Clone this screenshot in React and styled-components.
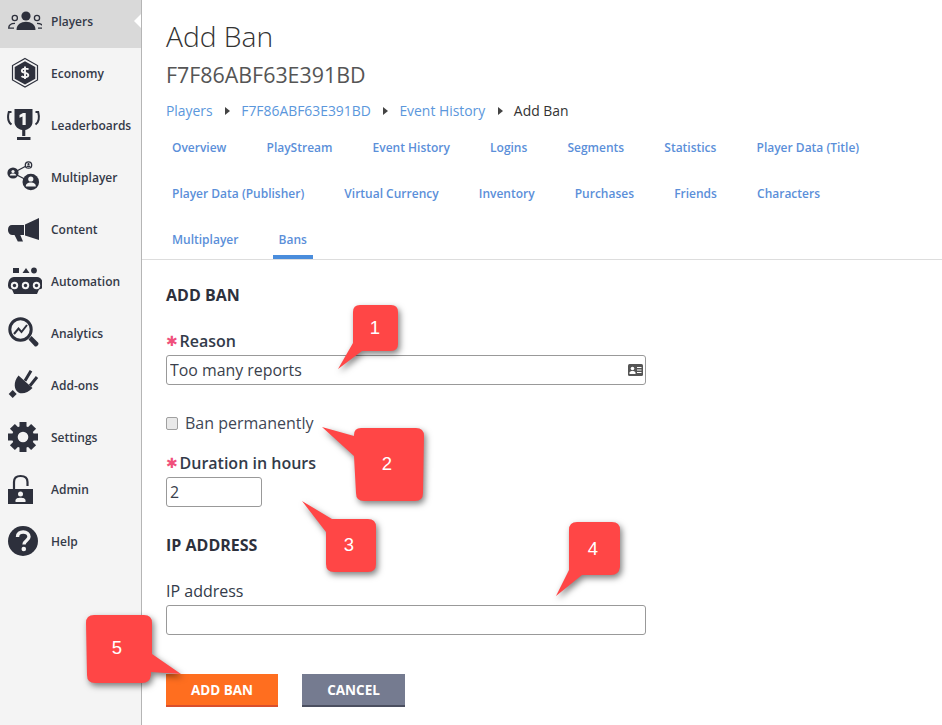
import React from "react";
import styled, { createGlobalStyle } from "styled-components";

const Global = createGlobalStyle`
  html, body { margin: 0; padding: 0; background: #fff; }
  body { font-family: "Open Sans", "Liberation Sans", sans-serif; color: #333; overflow: hidden; }
`;

const Page = styled.div`
  position: relative;
  display: flex;
  width: 942px;
  height: 725px;
  overflow: hidden;
`;

const Sidebar = styled.nav`
  flex: 0 0 141px;
  background: #f4f4f4;
  border-right: 1px solid #b5b5b5;
  display: flex;
  flex-direction: column;
  overflow: hidden;
`;

const NavList = styled.div`
  display: flex;
  flex-direction: column;
  margin-top: -5px;
`;

const NavRow = styled.div`
  position: relative;
  display: flex;
  align-items: center;
  height: 52px;
  flex: 0 0 52px;
  padding-left: 6px;
  gap: 9px;
  font-size: 12px;
  font-weight: 600;
  color: #343a48;
  background: ${(p) => (p.$active ? "#d9d9d9" : "transparent")};
  box-shadow: ${(p) => (p.$active ? "0 1px 0 #d9d9d9" : "none")};
  &::after {
    content: "";
    display: ${(p) => (p.$active ? "block" : "none")};
    position: absolute;
    right: 0;
    top: 19px;
    border-style: solid;
    border-width: 7px 7px 7px 0;
    border-color: transparent #fff transparent transparent;
  }
`;

const IconBox = styled.svg`
  width: 36px;
  height: 36px;
  flex: 0 0 36px;
  fill: #2d303c;
`;

const Main = styled.main`
  flex: 1;
  min-width: 0;
  display: flex;
  flex-direction: column;
`;

const Header = styled.header`
  padding: 16px 24px 0;
`;

const Title = styled.h1`
  margin: 0;
  font-size: 28.2px;
  font-weight: 300;
  line-height: 40px;
  color: #333;
`;

const SubTitle = styled.h2`
  margin: 5px 0 0;
  font-size: 21.4px;
  font-weight: 400;
  line-height: 28px;
  color: #555;
`;

const Breadcrumb = styled.div`
  display: flex;
  align-items: center;
  margin-top: 12px;
  font-size: 13.9px;
  line-height: 20px;
`;

const Crumb = styled.a`
  color: ${(p) => (p.$current ? "#333" : "#5b97dc")};
`;

const CrumbSep = styled.span`
  width: 0;
  height: 0;
  margin: 0 11.3px 0 12.3px;
  border-style: solid;
  border-width: 4px 0 4px 5px;
  border-color: transparent transparent transparent #444;
`;

const Tabs = styled.div`
  display: flex;
  flex-wrap: wrap;
  column-gap: 28.1px;
  row-gap: 3px;
  margin-top: 3px;
  padding: 0 24px;
  border-bottom: 1px solid #ddd;
`;

const Tab = styled.a`
  display: block;
  padding: 14px 6px 5px;
  font-size: 12px;
  font-weight: 600;
  line-height: 20px;
  color: #5b8fd9;
  border-bottom: 4px solid ${(p) => (p.$active ? "#4a8ddc" : "transparent")};
`;

const Form = styled.form`
  display: flex;
  flex-direction: column;
  align-items: flex-start;
  padding: 25px 24px 0;
`;

const SectionTitle = styled.h3`
  margin: ${(p) => p.$mt || 0}px 0 0;
  font-size: 16px;
  font-weight: 700;
  line-height: 20px;
  color: #2d303c;
  text-transform: uppercase;
`;

const Label = styled.label`
  display: flex;
  align-items: center;
  margin-top: ${(p) => p.$mt}px;
  font-size: 16px;
  font-weight: ${(p) => (p.$required ? 600 : 400)};
  line-height: 20px;
  color: #333b4a;
`;

const Asterisk = styled.span`
  display: inline-block;
  width: 13.5px;
  margin-left: 0;
  font-family: "DejaVu Sans", sans-serif;
  font-size: 14px;
  font-weight: 700;
  line-height: 20px;
  color: #f0507c;
`;

const InputWrap = styled.div`
  position: relative;
  margin-top: 4px;
  width: ${(p) => p.$w}px;
  height: 30px;
`;

const TextInput = styled.input`
  box-sizing: border-box;
  display: block;
  width: 100%;
  height: 100%;
  padding: 0 3px;
  border: 1px solid #999;
  border-radius: 3px;
  background: #fff;
  font-family: inherit;
  font-size: 15.9px;
  color: #3a3f4c;
  outline: none;
`;

const CardIcon = styled.svg`
  position: absolute;
  right: 3px;
  top: 9px;
  width: 15px;
  height: 12px;
`;

const CheckRow = styled.div`
  display: flex;
  align-items: center;
  gap: 7px;
  margin-top: 28px;
  height: 20px;
  font-size: 16px;
  line-height: 20px;
  color: #3f4756;
`;

const Check = styled.input`
  appearance: none;
  box-sizing: border-box;
  width: 12px;
  height: 13px;
  margin: 0;
  background: #e9e9e9;
  border: 1px solid #a0a0a0;
  border-radius: 2px;
`;

const Actions = styled.div`
  display: flex;
  gap: 24px;
  margin-top: 39px;
`;

const Button = styled.button`
  box-sizing: border-box;
  width: ${(p) => p.$w}px;
  height: 33px;
  padding: 0;
  border: 0;
  border-bottom: 2px solid ${(p) => (p.$primary ? "#d94f2c" : "#4b4f60")};
  background: ${(p) => (p.$primary ? "#ff6e1f" : "#757b90")};
  color: #fff;
  font-family: inherit;
  font-size: 13.5px;
  font-weight: 700;
`;

const CalloutLayer = styled.svg`
  position: absolute;
  inset: 0;
  width: 942px;
  height: 725px;
  pointer-events: none;
`;

const Bubble = styled.path`
  fill: #ff4646;
  filter: drop-shadow(2px 3px 3px rgba(0, 0, 0, 0.5));
`;

const BubbleNum = styled.text`
  fill: #fff;
  font-family: "Liberation Sans", Arial, sans-serif;
  font-size: 18.5px;
  text-anchor: middle;
`;

const BG = "#f4f4f4";
const icons = {
  players: (
    <>
      <circle cx="20" cy="13" r="4.6" />
      <path d="M10.500 27C10.500 21.500 15 18.800 20 18.800C25 18.800 29.500 21.500 29.500 27Z" />
      <g fill="none" stroke="#2d303c" strokeWidth="1.300">
        <circle cx="8.800" cy="15" r="2.600" />
        <circle cx="31" cy="15" r="2.600" />
        <path d="M9 20.300C5 20.300 2.700 22.500 2.700 25.200H8" />
        <path d="M31 20.300C35 20.300 37.300 22.500 37.300 25.200H32" />
      </g>
    </>
  ),
  economy: (
    <>
      <path d="M19 3.500L31.500 10.500V25L19 32L6.500 25V10.500Z" fill="none" stroke="#2d303c" strokeWidth="1.200" />
      <path d="M19 6.200L29.300 12V23.700L19 29.500L8.700 23.700V12Z" />
      <path d="M22.500 14.500C21.500 13.300 16 13 15.800 15.800C15.700 18.800 22.500 17 22.300 20.200C22.100 22.800 16.800 22.600 15.500 21.200M19 11.500V24" fill="none" stroke="#f4f4f4" strokeWidth="1.900" />
    </>
  ),
  trophy: (
    <>
      <path d="M8.500 2H26.500V15C26.500 20 22 22.500 19.300 23V29H16.200V23C13 22.500 8.500 20 8.500 15Z" />
      <path d="M11 30H24.500V33H11Z" />
      <path d="M5.500 5H2.800C1.500 10 2 15 5.500 17.500" fill="none" stroke="#2d303c" strokeWidth="2" />
      <path d="M29.500 5H32.200C33.500 10 33 15 29.500 17.500" fill="none" stroke="#2d303c" strokeWidth="2" />
      <path d="M13.500 8L17 6H19.700V18H16.500V9.500L13.500 10.800Z" fill="#f4f4f4" />
    </>
  ),
  multiplayer: (
    <>
      <path d="M7 14L22 6M7 14L24.500 23" stroke="#2d303c" strokeWidth="1.400" fill="none" />
      <circle cx="24.800" cy="23" r="8.300" />
      <circle cx="24.800" cy="20" r="2.600" fill={BG} />
      <path d="M19.800 27.500C19.800 24.500 22 23.500 24.800 23.500C27.600 23.500 29.800 24.500 29.800 27.500Z" fill={BG} />
      <circle cx="7" cy="14" r="5.600" />
      <circle cx="7" cy="12.500" r="1.600" fill={BG} />
      <path d="M3.800 16.500C3.800 15 5.500 14.500 7 14.500C8.500 14.500 10.200 15 10.200 16.500Z" fill={BG} />
      <circle cx="22.500" cy="6" r="3.200" fill={BG} stroke="#2d303c" strokeWidth="1.300" />
      <circle cx="22.500" cy="5.200" r="1.100" />
      <path d="M20.500 8C20.500 7 21.500 6.600 22.500 6.600C23.500 6.600 24.500 7 24.500 8Z" />
    </>
  ),
  content: (
    <>
      <path d="M33 7L19 13.500V24.500L33 29Z" />
      <path d="M18 14H6C3.500 14 2 16 2 18.800C2 21.500 3.500 24 6 24H8.500L11.800 30.500H17L14.300 24H18Z" />
    </>
  ),
  automation: (
    <>
      <path d="M7 5H13V10H7Z" />
      <path d="M20 5L23.500 10H16.500Z" />
      <circle cx="28" cy="7.500" r="2.900" />
      <path d="M8 14H31C35 14 37 18 37 22.500C37 25 35.500 26.500 33 26.500L31 31H8L6 26.500C3.500 26.500 2 25 2 22.500C2 18 4 14 8 14Z" />
      {[8.500, 19.500, 30.500].map((x) => (
        <g key={x}>
          <circle cx={x} cy="22.500" r="3.700" fill={BG} />
          <circle cx={x} cy="22.500" r="1.700" />
        </g>
      ))}
    </>
  ),
  analytics: (
    <>
      <circle cx="14.500" cy="14.500" r="10.700" fill="none" stroke="#2d303c" strokeWidth="3" />
      <path d="M22.500 24.500L25.500 21L32 27.500C33 28.500 32.500 30 31 31C30 31.700 29 31.700 28.500 31Z" />
      <path d="M8 19L12.500 13.500L15.500 17L21 10" fill="none" stroke="#2d303c" strokeWidth="2" />
    </>
  ),
  addons: (
    <>
      <path d="M12.500 8.500L26.500 21C22 26 16 27.500 12.500 25.500C8 23 7 15 12.500 8.500Z" />
      <path d="M19 13.700L25 3.700M24 18.700L31 10" stroke="#2d303c" strokeWidth="3" fill="none" />
      <path d="M6.700 23L10.700 27L6.700 31L2.700 27Z" />
    </>
  ),
  settings: (
    <>
      {[0, 45, 90, 135].map((a) => (
        <path key={a} d="M13.500 3H20.500V33H13.500Z" transform={`rotate(${a} 17 18)`} />
      ))}
      <circle cx="17" cy="18" r="11" />
      <circle cx="17" cy="18" r="5.300" fill={BG} />
    </>
  ),
  admin: (
    <>
      <path d="M8 19V11C8 6.500 10.500 5 14.500 5C18.500 5 21.500 6.500 21.500 11V15" fill="none" stroke="#2d303c" strokeWidth="2.200" />
      <path d="M2 18H27V33H2Z" />
      <circle cx="14.500" cy="23" r="2.500" fill={BG} />
      <path d="M9.500 31V29.500C9.500 27.500 12 26.800 14.500 26.800C17 26.800 19.500 27.500 19.500 29.500V31Z" fill={BG} />
    </>
  ),
  help: (
    <>
      <circle cx="17" cy="18" r="15" />
      <path d="M11.500 14C11.500 10.500 14 9 17.200 9C20.500 9 23 10.800 23 13.800C23 17.500 18 17.500 18 21.500" fill="none" stroke="#f4f4f4" strokeWidth="3.400" />
      <circle cx="17.800" cy="26" r="2.300" fill="#f4f4f4" />
    </>
  ),
};

const navItems = [
  ["Players", "players"],
  ["Economy", "economy"],
  ["Leaderboards", "trophy"],
  ["Multiplayer", "multiplayer"],
  ["Content", "content"],
  ["Automation", "automation"],
  ["Analytics", "analytics"],
  ["Add-ons", "addons"],
  ["Settings", "settings"],
  ["Admin", "admin"],
  ["Help", "help"],
];

const tabs = [
  "Overview", "PlayStream", "Event History", "Logins", "Segments", "Statistics",
  "Player Data (Title)", "Player Data (Publisher)", "Virtual Currency", "Inventory",
  "Purchases", "Friends", "Characters", "Multiplayer", "Bans",
];

const callouts = [
  { n: 1, x: 375, y: 334, d: "M353 312Q353 305 360 305H391Q398 305 398 312V344Q398 351 391 351H362L338 369L353 343Z" },
  { n: 2, x: 387, y: 470, d: "M354 435Q354 428 361 428H416Q424 428 424 436L423 493Q423 501 415 501H364Q356 501 356 493L354 456L322 427L354 436Z" },
  { n: 3, x: 349, y: 551, d: "M332 519H368Q376 519 376 527V564Q376 572 368 572H334Q326 572 326 564V532L302 501Z" },
  { n: 4, x: 593, y: 555, d: "M569 530Q569 522 577 522H612Q620 522 620 530V567Q619 575 611 575H582L556 596L569 570Z" },
  { n: 5, x: 117, y: 654, d: "M86 623Q86 615 94 615H144Q152 615 152 623V654L181 674L151 672V675Q150 683 142 683H95Q87 683 87 675Z" },
];

export default function App() {
  return (
    <>
      <Global />
      <Page>
        <Sidebar>
          <NavList>
            {navItems.map(([label, icon], i) => (
              <NavRow key={label} $active={i === 0}>
                <IconBox viewBox="0 0 36 36">{icons[icon]}</IconBox>
                {label}
              </NavRow>
            ))}
          </NavList>
        </Sidebar>
        <Main>
          <Header>
            <Title>Add Ban</Title>
            <SubTitle>F7F86ABF63E391BD</SubTitle>
            <Breadcrumb>
              <Crumb>Players</Crumb>
              <CrumbSep />
              <Crumb>F7F86ABF63E391BD</Crumb>
              <CrumbSep />
              <Crumb>Event History</Crumb>
              <CrumbSep />
              <Crumb $current>Add Ban</Crumb>
            </Breadcrumb>
          </Header>
          <Tabs>
            {tabs.map((t) => (
              <Tab key={t} $active={t === "Bans"}>{t}</Tab>
            ))}
          </Tabs>
          <Form>
            <SectionTitle>Add Ban</SectionTitle>
            <Label $mt={26} $required><Asterisk>✱</Asterisk>Reason</Label>
            <InputWrap $w={480}>
              <TextInput defaultValue="Too many reports" />
              <CardIcon viewBox="0 0 15 12">
                <rect width="15" height="12" rx="1.500" fill="#555" />
                <circle cx="4.500" cy="4.500" r="1.800" fill="#fff" />
                <path d="M1.500 10V8.800C1.500 7.500 3 7 4.500 7C6 7 7.500 7.500 7.500 8.800V10Z" fill="#fff" />
                <path d="M9 3.500H13.500M9 6H13.500M9 8.500H13.500" stroke="#fff" strokeWidth="1" />
              </CardIcon>
            </InputWrap>
            <CheckRow>
              <Check type="checkbox" />
              Ban permanently
            </CheckRow>
            <Label $mt={20} $required><Asterisk>✱</Asterisk>Duration in hours</Label>
            <InputWrap $w={96}>
              <TextInput defaultValue="2" />
            </InputWrap>
            <SectionTitle $mt={28}>IP Address</SectionTitle>
            <Label $mt={26}>IP address</Label>
            <InputWrap $w={480}>
              <TextInput />
            </InputWrap>
            <Actions>
              <Button type="button" $primary $w={112}>ADD BAN</Button>
              <Button type="button" $w={103}>CANCEL</Button>
            </Actions>
          </Form>
        </Main>
        <CalloutLayer viewBox="0 0 942 725">
          {callouts.map((c) => (
            <g key={c.n}>
              <Bubble d={c.d} />
              <BubbleNum x={c.x} y={c.y}>{c.n}</BubbleNum>
            </g>
          ))}
        </CalloutLayer>
      </Page>
    </>
  );
}
